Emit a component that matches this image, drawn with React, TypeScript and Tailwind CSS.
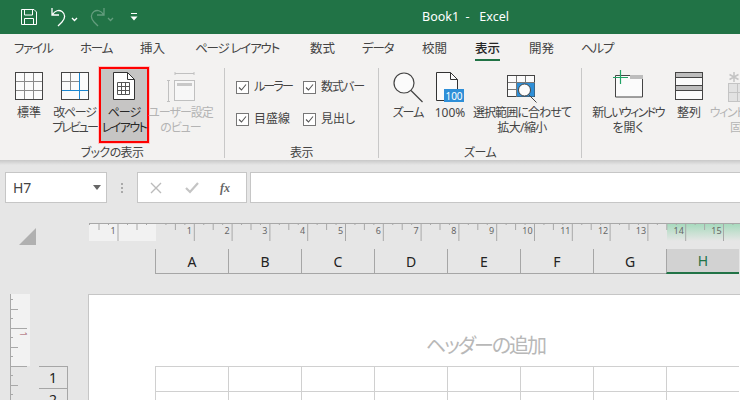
import type { ReactNode } from 'react';

const TABS = [
  { label: 'ファイル', w: 'w-[66px]', c: 'tracking-[-1.2px]' },
  { label: 'ホーム', w: 'w-[60px]', c: 'tracking-[-1.2px]' },
  { label: '挿入', w: 'w-[55px]' },
  { label: 'ページ レイアウト', w: 'w-[115px]', c: 'tracking-[-1.2px]' },
  { label: '数式', w: 'w-[52px]' },
  { label: 'データ', w: 'w-[60px]', c: 'tracking-[-1.2px]' },
  { label: '校閲', w: 'w-[53px]' },
  { label: '表示', w: 'w-[54px]', active: true },
  { label: '開発', w: 'w-[52px]' },
  { label: 'ヘルプ', w: 'w-[60px]', c: 'tracking-[-1.2px]' },
];

const COLUMNS = ['A', 'B', 'C', 'D', 'E', 'F', 'G'];

type Line = { t: string; c?: string };

function Save() {
  return (
    <svg width="18" height="18" viewBox="0 0 18 18" fill="none" stroke="#fff" strokeWidth="1">
      <path d="M1.5 1.5h12.5l2.5 2.5v12.5h-15z" />
      <path d="M4.5 1.5v5.5h8v-5.5M4.5 16.5v-6h9v6" />
    </svg>
  );
}

function QuickBar() {
  return (
    <div className="flex h-[34px] shrink-0 items-center bg-[#217346] text-white">
      <div className="ml-[20px] flex h-[18px] w-[18px]">
        <Save />
      </div>
      <svg className="ml-[12px]" width="36" height="24" viewBox="0 0 36 24" fill="none" stroke="#fff" strokeWidth="1.3">
        <path d="M2 3v7h7M2.5 9.5C5 5.5 9 4.5 12 6.5c3.5 2.4 3.5 7 0 10.5l-4 4" />
        <path d="M22 13l2.5 2.5L27 13" />
      </svg>
      <svg className="ml-[1px] opacity-30" width="36" height="24" viewBox="0 0 36 24" fill="none" stroke="#fff" strokeWidth="1.3">
        <path d="M17 3v7h-7M16.5 9.5C14 5.5 10 4.5 7 6.5c-3.5 2.4-3.5 7 0 10.5l4 4" />
        <path d="M21 13l2.5 2.5L26 13" />
      </svg>
      <svg className="ml-[6px]" width="10" height="10" viewBox="0 0 10 10" fill="#fff">
        <path d="M2 1h6v1H2zM1.5 4.5h7L5 8.5z" />
      </svg>
      <span className="ml-[283px] whitespace-pre text-[12.5px] leading-none">Book1  -   Excel</span>
    </div>
  );
}

function Tabs() {
  return (
    <div className="flex h-[32px] shrink-0 pl-[14px]">
      {TABS.map(t => (
        <div key={t.label} className={`${t.w} shrink-0 pt-[7px]`}>
          <div
            className={`h-[20px] w-fit whitespace-pre text-[12.5px] leading-[16px] ${t.c ?? ''} ${
              t.active ? 'border-b-[2px] border-[#217346] font-medium text-[#262626]' : 'text-[#444]'
            }`}
          >
            {t.label}
          </div>
        </div>
      ))}
    </div>
  );
}

function RibbonButton({
  icon, lines, w, disabled, selected,
}: { icon: ReactNode; lines: Line[]; w: string; disabled?: boolean; selected?: boolean }) {
  return (
    <div
      className={`${w} flex h-[76px] shrink-0 flex-col items-center ${
        selected
          ? '-mt-[1px] border-2 border-[#f00] bg-[#c6c5c4] pt-[3px] text-[#262626] shadow-[0_0_0_1px_#ffc4c4]'
          : 'pt-[4px]'
      } ${disabled ? 'text-[#b4b4b4]' : selected ? '' : 'text-[#444]'}`}
    >
      <div className="flex h-[33px] items-start justify-center">{icon}</div>
      <div className="whitespace-nowrap text-center text-[12px] leading-[15px]">
        {lines.map(l => (
          <div key={l.t} className={l.c}>{l.t}</div>
        ))}
      </div>
    </div>
  );
}

function Group({ label, w, children, last }: { label: string; w: string; children: ReactNode; last?: boolean }) {
  return (
    <div className={`${w} relative mt-[2px] h-[90px] shrink-0 ${last ? '' : 'border-r border-[#c8c8c8]'}`}>
      <div className="flex h-[76px]">{children}</div>
      <div className="mt-[1px] text-center text-[12px] leading-[16px] tracking-[-0.6px] text-[#444]">{label}</div>
    </div>
  );
}

function Check({ label, w, c }: { label: string; w: string; c?: string }) {
  return (
    <div className={`${w} flex items-center gap-[5px]`}>
      <svg width="13" height="13" viewBox="0 0 13 13" fill="none">
        <rect x="0.5" y="0.5" width="12" height="12" fill="#fff" stroke="#777" />
        <path d="M3 6.5l2.5 2.5L10 3.5" stroke="#555" strokeWidth="1.1" />
      </svg>
      <span className={`whitespace-nowrap text-[12px] leading-[16px] text-[#444] ${c ?? ''}`}>{label}</span>
    </div>
  );
}

const GridIcon = () => (
  <svg width="28" height="28" viewBox="0 0 28 28" fill="#fbfbfb">
    <rect x="0.5" y="0.5" width="27" height="27" stroke="#444" />
    <path d="M9.5 1v26M18.5 1v26M1 9.5h26M1 18.5h26" stroke="#8a8a8a" />
  </svg>
);

const BreakIcon = () => (
  <svg width="28" height="28" viewBox="0 0 28 28" fill="#fbfbfb">
    <rect x="0.5" y="0.5" width="27" height="27" stroke="#444" />
    <path d="M9.5 1v17M1 9.5h17" stroke="#8a8a8a" />
    <path d="M18.5 1v26M1 18.5h26" stroke="#1a86d0" />
  </svg>
);

const PageIcon = () => (
  <svg width="22" height="28" viewBox="0 0 22 28" fill="#fff" stroke="#333">
    <path d="M0.5 0.5h14l7 7v20h-21z" />
    <path d="M14.5 0.5v7h7" fill="none" />
    <path d="M4.5 10.5h12v12h-12zM4.5 14.5h12M4.5 18.5h12M8.5 10.5v12M12.5 10.5v12" fill="none" stroke="#555" />
  </svg>
);

const CustomIcon = () => (
  <svg width="28" height="30" viewBox="0 0 28 30" fill="none" stroke="#c0c0c0">
    <path d="M1.5 8v22M0 8.5h3M0 29.5h3M8 1.5h19M8 0v3M27 0v3" />
    <rect x="7.5" y="8.5" width="20" height="20" fill="#f7f7f7" />
    <rect x="10" y="11" width="15" height="3" fill="#c8c8c8" stroke="none" />
  </svg>
);

const ZoomIcon = () => (
  <svg width="30" height="31" viewBox="0 0 30 31" fill="none" stroke="#444" strokeWidth="1.2">
    <circle cx="11" cy="11" r="10" fill="#fbfbfb" />
    <path d="M18 18.5l11.5 11.5" />
  </svg>
);

const HundredIcon = () => (
  <svg width="28" height="30" viewBox="0 0 28 30" fill="#fbfbfb" stroke="#333">
    <path d="M0.5 0.5h14l7 7v21h-21z" />
    <path d="M14.5 0.5v7h7" fill="none" />
    <rect x="8" y="17" width="20" height="13" fill="#2e8fd8" stroke="none" />
    <text x="18" y="27.5" fill="#fff" stroke="none" fontSize="10" textAnchor="middle">100</text>
  </svg>
);

const FitIcon = () => (
  <svg className="mt-[3px]" width="30" height="28" viewBox="0 0 30 28" fill="none">
    <rect x="0.5" y="0.5" width="27" height="21" fill="#fbfbfb" stroke="#444" />
    <path d="M1 7.5h27M1 14.5h9M9.5 1v21M18.5 1v7" stroke="#777" />
    <rect x="10" y="8" width="17.5" height="13.5" fill="#2e8fd8" />
    <circle cx="17.5" cy="15" r="6" fill="#fbfbfb" stroke="#444" />
    <path d="M21.5 19.5l8 8" stroke="#444" />
  </svg>
);

const NewWindowIcon = () => (
  <svg className="-mt-[2px]" width="30" height="28" viewBox="0 0 30 28" fill="none">
    <path d="M2.5 5.5h27v21.5h-27z" fill="#fbfbfb" stroke="#444" />
    <rect x="17" y="5" width="13" height="4" fill="#bdbdbd" />
    <path d="M0 7.5h15M7.5 0v14" stroke="#21a366" strokeWidth="1.2" />
  </svg>
);

const ArrangeIcon = () => (
  <svg width="28" height="28" viewBox="0 0 28 28" fill="#fbfbfb" stroke="#444">
    <rect x="0.5" y="0.5" width="27" height="27" />
    <rect x="1" y="1" width="26" height="4" fill="#bdbdbd" stroke="none" />
    <rect x="1" y="14" width="26" height="4" fill="#bdbdbd" stroke="none" />
    <path d="M0 5.5h28M0 13.5h28M0 18.5h28" />
  </svg>
);

const FreezeIcon = () => (
  <svg width="28" height="30" viewBox="0 0 28 30" fill="none" stroke="#c4c4c4">
    <path d="M6 0v10M1.5 2.5l9 5M10.5 2.5l-9 5" strokeWidth="1.5" />
    <rect x="0.5" y="11.5" width="27" height="18" fill="#e2e2e2" />
    <path d="M0 20.5h28M9.5 11v19" />
  </svg>
);

function Ribbon() {
  return (
    <div className="relative z-10 flex h-[94px] shrink-0">
      <Group label="ブックの表示" w="w-[225px]">
        <div className="flex h-[76px] pl-[8px]">
          <RibbonButton w="w-[42px]" icon={<GridIcon />} lines={[{ t: '標準' }]} />
          <RibbonButton
            w="w-[49px]"
            icon={<BreakIcon />}
            lines={[{ t: '改ページ', c: 'tracking-[-1.2px]' }, { t: 'プレビュー', c: 'tracking-[-2px]' }]}
          />
          <RibbonButton
            w="w-[50px]"
            selected
            icon={<PageIcon />}
            lines={[{ t: 'ページ', c: 'tracking-[-1px]' }, { t: 'レイアウト', c: 'tracking-[-1.6px]' }]}
          />
          <RibbonButton
            w="w-[63px]"
            disabled
            icon={<CustomIcon />}
            lines={[{ t: 'ユーザー設定', c: 'tracking-[-1px]' }, { t: 'のビュー', c: 'tracking-[-1px]' }]}
          />
        </div>
      </Group>
      <Group label="表示" w="w-[154px]">
        <div className="flex flex-col gap-[16px] pl-[11px] pt-[11px]">
          <div className="flex">
            <Check w="w-[67px]" label="ルーラー" c="tracking-[-1.8px]" />
            <Check w="w-[70px]" label="数式バー" c="tracking-[-1px]" />
          </div>
          <div className="flex">
            <Check w="w-[67px]" label="目盛線" />
            <Check w="w-[70px]" label="見出し" />
          </div>
        </div>
      </Group>
      <Group label="ズーム" w="w-[203px]">
        <div className="flex pl-[9px]">
          <RibbonButton w="w-[40px]" icon={<ZoomIcon />} lines={[{ t: 'ズーム', c: 'tracking-[-1px]' }]} />
          <RibbonButton w="w-[44px]" icon={<HundredIcon />} lines={[{ t: '100%' }]} />
          <RibbonButton
            w="w-[100px]"
            icon={<FitIcon />}
            lines={[{ t: '選択範囲に合わせて', c: 'tracking-[-0.9px]' }, { t: '拡大/縮小', c: 'tracking-[-0.6px]' }]}
          />
        </div>
      </Group>
      <Group label="" w="w-[158px]" last>
        <div className="flex pl-[8px]">
          <RibbonButton
            w="w-[76px]"
            icon={<NewWindowIcon />}
            lines={[{ t: '新しいウィンドウ', c: 'tracking-[-1.6px]' }, { t: 'を開く' }]}
          />
          <RibbonButton w="w-[46px]" icon={<ArrangeIcon />} lines={[{ t: '整列' }]} />
          <RibbonButton
            w="w-[60px]"
            disabled
            icon={<FreezeIcon />}
            lines={[{ t: 'ウィンドウ枠の', c: 'tracking-[-1.4px]' }, { t: '固定' }]}
          />
        </div>
      </Group>
    </div>
  );
}

function FormulaBar() {
  return (
    <div className="flex h-[31px] shrink-0 items-stretch pl-[5px]">
      <div className="flex w-[102px] items-center justify-between border border-[#c6c6c6] bg-white pl-[7px] pr-[5px]">
        <span className="text-[14px] text-[#444]">H7</span>
        <svg width="8" height="5" viewBox="0 0 8 5" fill="#666">
          <path d="M0 0h8L4 5z" />
        </svg>
      </div>
      <div className="flex w-[30px] flex-col items-center justify-center gap-[2px]">
        <span className="h-[2px] w-[2px] bg-[#aaa]" />
        <span className="h-[2px] w-[2px] bg-[#aaa]" />
        <span className="h-[2px] w-[2px] bg-[#aaa]" />
      </div>
      <div className="flex w-[110px] items-center border border-[#c6c6c6] bg-white pl-[12px]">
        <svg width="12" height="12" viewBox="0 0 12 12" stroke="#bbb" strokeWidth="1.4" fill="none">
          <path d="M1 1l10 10M11 1L1 11" />
        </svg>
        <svg className="ml-[23px]" width="14" height="12" viewBox="0 0 14 12" stroke="#c4c4c4" strokeWidth="2.2" fill="none">
          <path d="M1 6l4 4 8-9" />
        </svg>
        <span className="ml-[21px] font-['Liberation_Serif',serif] text-[12px] font-bold italic text-[#666]">fx</span>
      </div>
      <div className="ml-[3px] flex-1 border-y border-l border-[#c6c6c6] bg-white" />
    </div>
  );
}

function HorizontalRuler() {
  const majors = Array.from({ length: 16 }, (_, i) => 156.5 + 37.8 * i);
  const ticks: ReactNode[] = [];
  majors.forEach((x, i) => {
    const mx = x - 89;
    if (i > 0) {
      ticks.push(<path key={`m${i}`} d={`M${mx} 0v18`} stroke="#a8a8a8" />);
      ticks.push(
        <text key={`t${i}`} x={mx - (i > 9 ? 7 : 5)} y={10.5} fontSize="9" fill="#666" textAnchor="middle">
          {i}
        </text>,
      );
    }
    ticks.push(<path key={`h${i}`} d={`M${mx + 18.9} 0v7`} stroke="#a8a8a8" />);
    ticks.push(<path key={`q${i}`} d={`M${mx + 9.45} 0v2M${mx + 28.35} 0v2`} stroke="#a8a8a8" />);
  });
  return (
    <div className="flex h-[18px] shrink-0 pl-[19px]">
      <svg className="mt-[5px] shrink-0" width="17" height="17" viewBox="0 0 17 17" fill="#b0b0b0">
        <path d="M17 0v17H0z" />
      </svg>
      <div className="relative ml-[53px] flex h-[18px] w-[651px] shrink-0">
        <div className="h-full w-[67px] bg-[#f2f2f2]" />
        <div className="h-full w-[511px]" />
        <div className="h-full w-[73px] bg-gradient-to-b from-[#a3d9bb] to-[#e6e6e6]" />
        <svg className="absolute left-0 top-0" width="651" height="18" viewBox="0 0 651 18" fill="none">
          <path d="M0 0.5h651" stroke="#a8a8a8" />
          <path d="M10 0v7M48 0v7M19.5 0v2M0.5 0v2M38.5 0v2M57.5 0v2" stroke="#a8a8a8" />
          <path d="M29 0v18" stroke="#a8a8a8" />
          <text x="24" y="10.5" fontSize="9" fill="#666" textAnchor="middle">1</text>
          {ticks}
        </svg>
      </div>
    </div>
  );
}

function ColumnHeaders() {
  return (
    <div className="mt-[8px] flex h-[25px] shrink-0 items-stretch pl-[155px]">
      {COLUMNS.map(c => (
        <div
          key={c}
          className="flex w-[73px] shrink-0 items-center justify-center border-b border-l border-[#a6a6a6] text-[14px] text-[#222]"
        >
          {c}
        </div>
      ))}
      <div className="flex w-[73px] shrink-0 items-center justify-center border-b-2 border-l border-[#217346] border-l-[#a6a6a6] bg-[#d2d2d2] text-[14px] text-[#217346]">
        H
      </div>
    </div>
  );
}

function VerticalRuler() {
  const ys = [5, 15, 24, 34, 43, 53, 62, 72, 81, 91, 100];
  return (
    <div className="relative h-full w-[20px] border-l border-[#a8a8a8]">
      <div className="h-[72px] bg-[#f2f2f2]" />
      <svg className="absolute left-0 top-0" width="19" height="110" viewBox="0 0 19 110" fill="none">
        {ys.map((y, i) => (
          <path key={y} d={`M0 ${y + 0.5}h${i % 4 === 3 ? 16 : i % 2 === 1 ? 7 : 2}`} stroke="#a8a8a8" />
        ))}
        <text x="0" y="0" transform="translate(9 40) rotate(90)" fontSize="8" fill="#a05060" textAnchor="middle">1</text>
      </svg>
    </div>
  );
}

function Sheet() {
  return (
    <div className="mt-[20px] flex min-h-0 flex-1">
      <div className="flex w-[88px] shrink-0 pl-[10px]">
        <VerticalRuler />
        <div className="ml-[9px] mt-[72px] flex w-[29px] flex-col">
          <div className="flex h-[25px] items-center justify-center border-y border-r border-[#a6a6a6] text-[14px] text-[#222]">1</div>
          <div className="flex h-[25px] items-center justify-center border-r border-[#a6a6a6] text-[14px] text-[#222]">2</div>
        </div>
      </div>
      <div className="flex-1 overflow-hidden border-l border-t border-[#c6c6c6] bg-white">
        <div className="flex h-[71px] items-end justify-center pb-[5px] pl-[142px] text-[20px] leading-[30px] tracking-[-2px] text-[#b8b8b8]">
          ヘッダーの追加
        </div>
        <div className="grid w-[730px] grid-cols-[repeat(8,73px)] pl-[66px]">
          {Array.from({ length: 16 }, (_, i) => (
            <div key={i} className="h-[25px] border-l border-t border-[#d0d0d0]" />
          ))}
        </div>
      </div>
    </div>
  );
}

export default function App() {
  return (
    <div className="flex h-[400px] w-[740px] flex-col overflow-hidden bg-[#e6e6e6] font-['Noto_Sans','Noto_Sans_CJK_JP',sans-serif] [font-feature-settings:'palt']">
      <QuickBar />
      <div className="flex h-[126px] shrink-0 flex-col bg-[#f3f2f1]">
        <Tabs />
        <Ribbon />
      </div>
      <div className="h-[5px] shrink-0 bg-gradient-to-b from-[#c8c8c8] to-[#e6e6e6]" />
      <div className="h-[7px] shrink-0" />
      <FormulaBar />
      <div className="h-[20px] shrink-0" />
      <HorizontalRuler />
      <ColumnHeaders />
      <Sheet />
    </div>
  );
}
